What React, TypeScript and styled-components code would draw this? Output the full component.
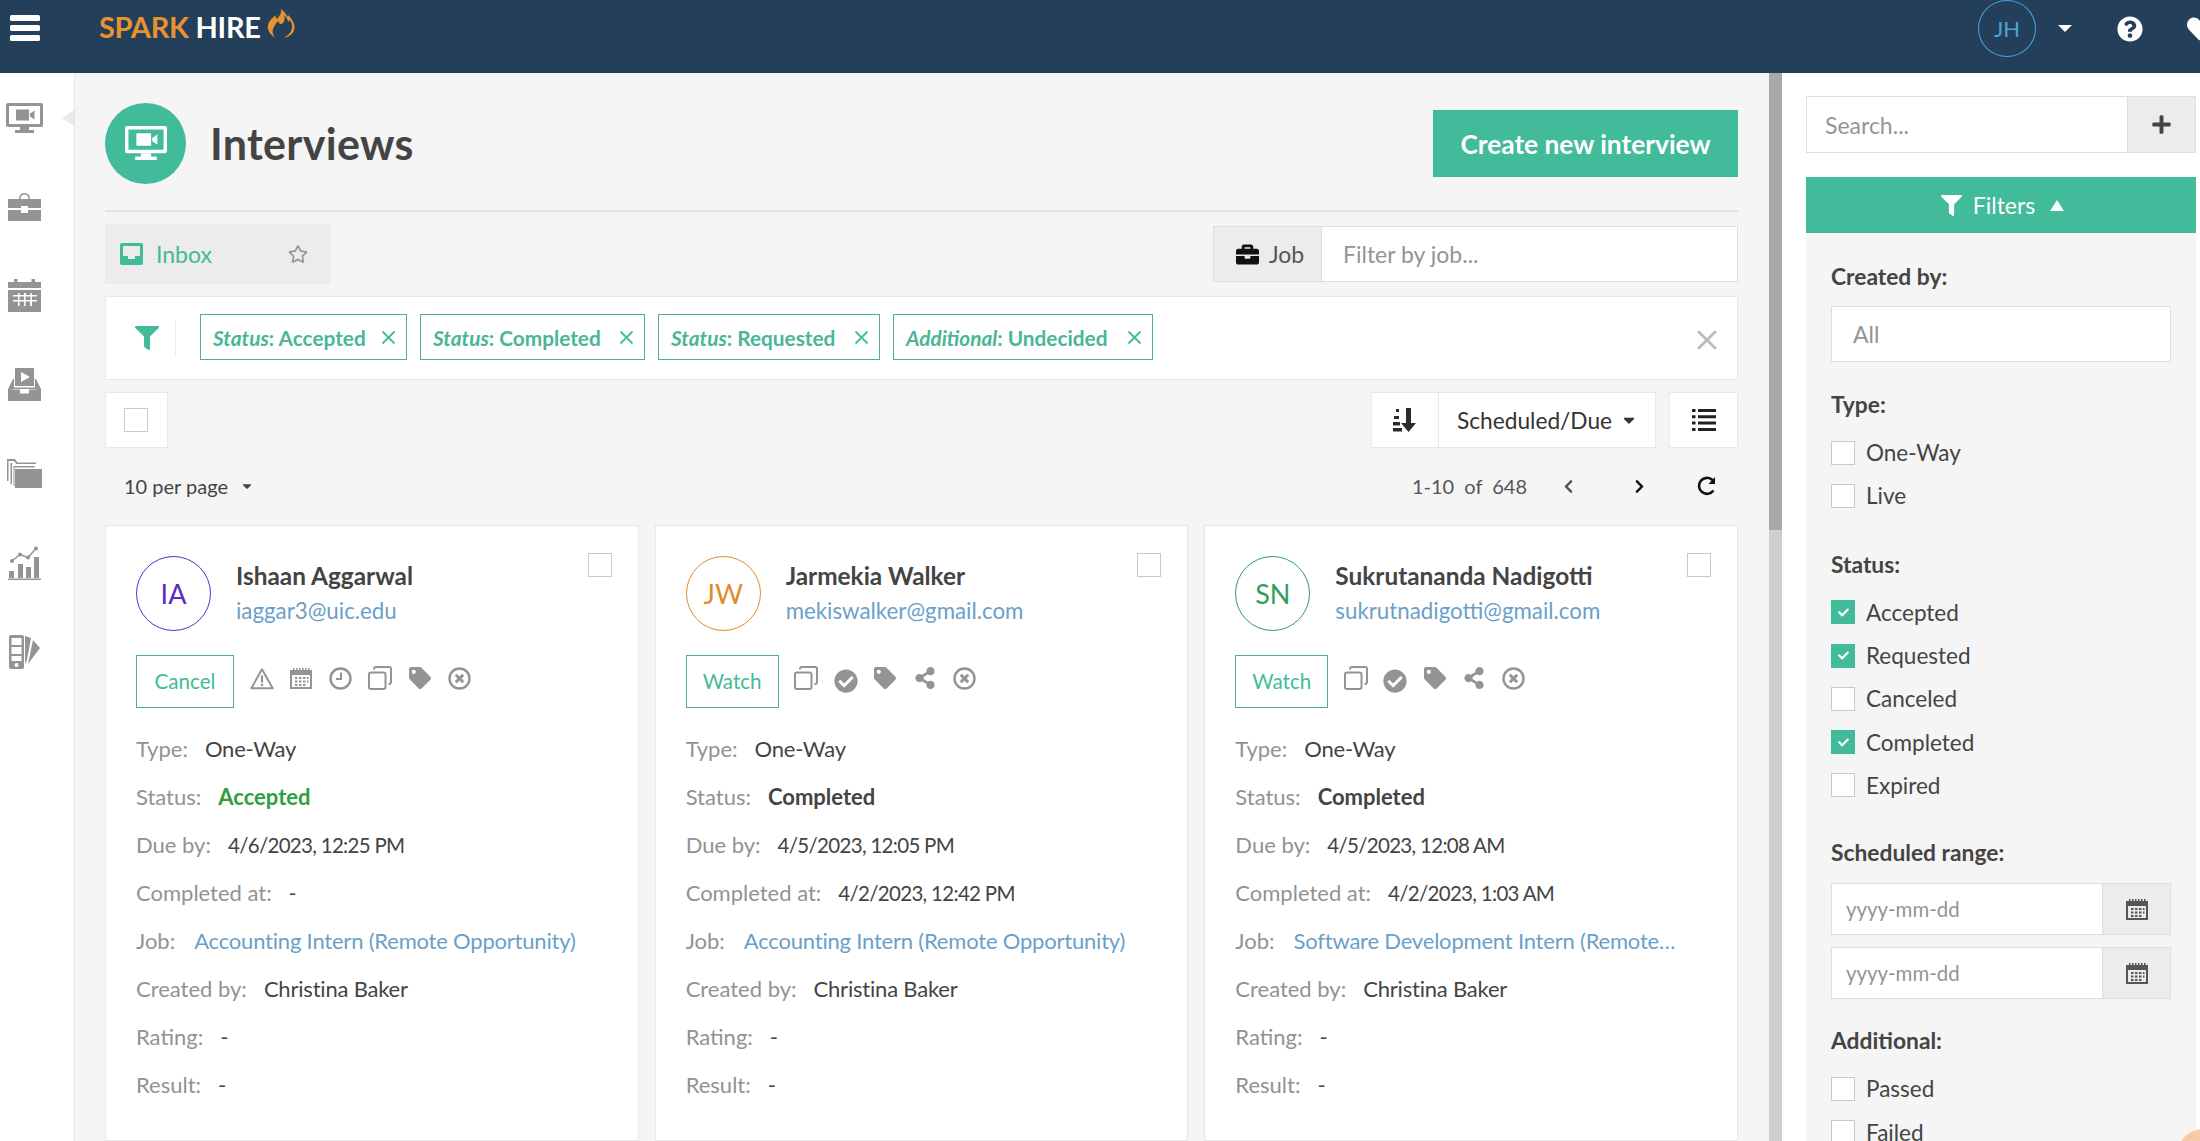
import React from 'react';
import styled, { createGlobalStyle } from 'styled-components';
import { FaFilter, FaPlus, FaQuestionCircle, FaHeart, FaTag, FaShareAlt, FaCheckCircle, FaChevronLeft, FaChevronRight, FaRegStar, FaBriefcase, FaCheck, FaCaretDown } from 'react-icons/fa';

const TEAL = '#41bb99';
const FONT = `Lato, "Noto Sans", "Liberation Sans", sans-serif`;

const Global = createGlobalStyle`
  html, body { margin: 0; padding: 0; height: 1141px; overflow: hidden; background: #fff; }
  body { font-family: ${FONT}; color: #444; }
  * { box-sizing: border-box; }
`;

const Page = styled.div`width: 2200px; height: 1141px; overflow: hidden; display: flex; flex-direction: column; position: relative;`;
const TopBar = styled.header`height: 73px; flex: none; background: #233f5a; display: flex; align-items: center; padding-bottom: 16px; overflow: hidden;`;
const MenuCell = styled.div`width: 75px; height: 73px; margin-bottom: -16px; padding: 15px 0 0 10px; border-right: 1px solid #1f3950; flex: none;`;
const Burger = styled.div`width: 30px; height: 26px; display: flex; flex-direction: column; justify-content: space-between;`;
const BurgerBar = styled.span`display: block; height: 6px; border-radius: 1.5px; background: #fff;`;
const Logo = styled.div`display: flex; align-items: center; margin-left: 24px; font-size: 29px; font-weight: 700; letter-spacing: -0.3px; line-height: 1; margin-top: -4px;`;
const LogoSpark = styled.span`color: #e8932f;`;
const LogoHire = styled.span`color: #fff; margin-left: 7px;`;
const LogoFlame = styled.svg`width: 28px; height: 29px; margin: -6px 0 0 6px;`;
const UserArea = styled.div`margin-left: auto; margin-right: -13px; display: flex; align-items: center;`;
const UserCircle = styled.div`width: 58px; height: 57px; border-radius: 50%; border: 1px solid #45a6d6; color: #45a6d6; font-size: 22px; display: flex; align-items: center; justify-content: center;`;
const TopCaret = styled.div`width: 0; height: 0; margin: 0 45px 0 22px; border-left: 7px solid transparent; border-right: 7px solid transparent; border-top: 7px solid #fff;`;
const TopIcons = styled.div`display: flex; align-items: center; gap: 44px; color: #fff; font-size: 26px; line-height: 0;`;

const Body = styled.div`flex: 1; display: flex; min-height: 0;`;
const Nav = styled.nav`width: 75px; flex: none; background: #fff; border-right: 1px solid #e6e6e6; display: flex; flex-direction: column; color: #949494;`;
const NavItem = styled.div`height: 89px; flex: none; display: flex; align-items: center; justify-content: center; position: relative; padding-right: 25px;`;
const NavArrow = styled.span`position: absolute; right: 0; top: 37px; width: 0; height: 0; border-top: 8px solid transparent; border-bottom: 8px solid transparent; border-right: 12px solid #e9e9e9;`;

const Main = styled.main`width: 1694px; flex: none; background: #f5f5f5; padding: 30px 31px 0 30px; overflow: hidden;`;
const TitleRow = styled.div`display: flex; align-items: center; height: 109px; padding-bottom: 27px; border-bottom: 2px solid #e2e2e2;`;
const TitleCircle = styled.div`width: 81px; height: 81px; border-radius: 50%; background: ${TEAL}; color: #fff; display: flex; align-items: center; justify-content: center; flex: none;`;
const Title = styled.h1`font-size: 43px; font-weight: 700; color: #444; margin: 1px 0 0 24px; letter-spacing: 0.3px;`;
const CreateButton = styled.button`margin-left: auto; width: 305px; height: 67px; border: 0; background: ${TEAL}; color: #fff; font: 700 26.3px ${FONT}; margin-top: 1px;`;

const TabRow = styled.div`display: flex; align-items: center; justify-content: space-between; margin-top: 12px;`;
const InboxTab = styled.div`width: 225px; height: 60px; background: #ececec; display: flex; align-items: center; padding: 0 15px; color: ${TEAL}; font-size: 23px;`;
const InboxLabel = styled.span`margin-left: 13px; flex: 1;`;
const StarIcon = styled(FaRegStar)`color: #949494; font-size: 20px; margin-right: 7px;`;
const JobGroup = styled.div`width: 525px; height: 56px; display: flex; border: 1px solid #dedede; background: #fff;`;
const JobAddon = styled.div`width: 108px; background: #ececec; border-right: 1px solid #dedede; display: flex; align-items: center; padding-left: 22px; gap: 10px; font-size: 23px; color: #555;`;
const JobBagIcon = styled(FaBriefcase)`color: #111; font-size: 23px;`;
const PlaceholderText = styled.span<{ $size?: number; $pad?: number }>`color: #949494; font-size: ${p => p.$size ?? 23}px; padding-left: ${p => p.$pad ?? 21}px; align-self: center;`;

const FilterBar = styled.div`margin-top: 12px; height: 84px; background: #fff; border: 1px solid #e8e8e8; display: flex; align-items: center; padding: 0 19px 0 29px;`;
const FunnelIcon = styled(FaFilter)`color: ${TEAL}; font-size: 24px; flex: none;`;
const BarSep = styled.span`width: 1px; height: 37px; background: #ededed; margin: 0 24px 0 16px;`;
const Chips = styled.div`display: flex; gap: 13px; margin-top: -2px;`;
const Chip = styled.div<{ $w: number }>`width: ${p => p.$w}px; height: 46px; border: 1.5px solid #4fae96; color: #4ab597; font-size: 20.8px; font-weight: 700; display: flex; align-items: center; justify-content: space-between; padding: 0 10px 0 12px; white-space: nowrap;`;
const ChipKey = styled.em`font-style: italic;`;
const ThinX = styled.svg<{ $c: string; $size: number }>`width: ${p => p.$size}px; height: ${p => p.$size}px; color: ${p => p.$c}; flex: none;`;
const ClearSlot = styled.div`margin-left: auto; margin-top: 3px; line-height: 0;`;

const Toolbar = styled.div`display: flex; align-items: stretch; height: 56px; margin-top: 12px; gap: 13px;`;
const SelectAll = styled.div`width: 63px; background: #fff; border: 1px solid #e8e8e8; display: flex; align-items: center; justify-content: center; margin-right: auto; padding-right: 1px;`;
const SortGroup = styled.div`width: 285px; background: #fff; border: 1px solid #e8e8e8; display: flex; align-items: center;`;
const SortIconCell = styled.div`width: 67px; height: 100%; border-right: 1px solid #e8e8e8; display: flex; align-items: center; justify-content: center; color: #2b2b2b;`;
const SortLabel = styled.div`flex: 1; display: flex; align-items: center; justify-content: space-between; padding: 0 17px 0 18px; font-size: 22.7px; color: #333;`;
const ListButton = styled.div`width: 69px; background: #fff; border: 1px solid #e8e8e8; display: flex; align-items: center; justify-content: center; color: #222;`;

const PagerRow = styled.div`height: 76.5px; display: flex; align-items: center; padding: 0 21px 0 19px; font-size: 20px; color: #444;`;
const PerPage = styled.div`display: flex; align-items: center; gap: 12px; margin-right: auto;`;
const PagerInfo = styled.div`word-spacing: 5px; color: #555;`;
const PagerButtons = styled.div`display: flex; align-items: center; margin-left: 34px; color: #333; font-size: 18px;`;
const PagerPrev = styled(FaChevronLeft)`color: #555; font-size: 15px;`;
const PagerNext = styled(FaChevronRight)`color: #111; font-size: 15px; margin-left: 56px;`;
const PagerReload = styled.svg`width: 20px; height: 20px; margin-left: 50px; color: #111;`;

const CardGrid = styled.div`display: grid; grid-template-columns: repeat(3, 1fr); gap: 16px;`;
const Card = styled.article`background: #fff; border: 1px solid #e8e8e8; padding: 30px 26px 31px 30px; min-width: 0;`;
const CardHead = styled.div`display: flex; align-items: flex-start; height: 74px;`;
const Avatar = styled.div<{ $c: string }>`width: 75px; height: 75px; border-radius: 50%; border: 1px solid ${p => p.$c}; color: ${p => p.$c}; display: flex; align-items: center; justify-content: center; font-size: 27px; flex: none;`;
const Person = styled.div`margin-left: 25px; flex: 1; min-width: 0; padding-top: 3px;`;
const PersonName = styled.div`font-size: 24.4px; font-weight: 700; color: #444; line-height: 34px;`;
const PersonMail = styled.div`font-size: 22.3px; color: #6a9fc9; line-height: 36px;`;
const CheckBox = styled.div<{ $on?: boolean }>`width: 24px; height: 24px; flex: none; background: ${p => (p.$on ? TEAL : '#fff')}; border: 1px solid ${p => (p.$on ? TEAL : '#c9c9c9')}; display: flex; align-items: center; justify-content: center; color: #fff; font-size: 11px;`;
const CardCheck = styled(CheckBox)`margin-top: -3px;`;
const Actions = styled.div`display: flex; align-items: center; margin-top: 25px; height: 53px; gap: 15.5px; color: #949494;`;
const ActionButton = styled.button<{ $w: number }>`width: ${p => p.$w}px; height: 53px; padding: 0; border: 1px solid #4fae96; background: #fff; color: ${TEAL}; font: 400 20.6px ${FONT};`;
const ActionIcon = styled.span`width: 24px; height: 26px; display: flex; align-items: center; justify-content: center; margin-top: -6px; font-size: 22px; flex: none;`;
const CheckCircleIcon = styled(FaCheckCircle)`font-size: 24px; margin-top: 5px;`;
const Rows = styled.div`margin-top: 17px;`;
const Row = styled.div`height: 48px; display: flex; align-items: center; font-size: 22px; white-space: nowrap;`;
const RowLabel = styled.span`color: #929292; margin-right: 17px; flex: none;`;
const RowValue = styled.span`color: #444; letter-spacing: -0.2px;`;
const RowDate = styled.span`color: #444; font-size: 20.5px; letter-spacing: -0.7px;`;
const RowStrong = styled.span<{ $c: string }>`color: ${p => p.$c}; font-weight: 700;`;
const RowLink = styled.span`color: #6a9fc9; font-size: 22px; letter-spacing: -0.2px; margin-left: 2px; max-width: 387px; overflow: hidden; text-overflow: ellipsis;`;

const Scrollbar = styled.div`width: 13px; flex: none; background: #cfcfcf; display: flex; flex-direction: column;`;
const ScrollThumb = styled.div`height: 457px; background: #a9a9a9;`;

const Side = styled.aside`flex: 1; background: #fff; padding: 23px 4px 0 24px; min-width: 0;`;
const SearchGroup = styled.div`height: 57px; display: flex; border: 1px solid #dedede;`;
const SearchAddon = styled.div`width: 68px; margin-left: auto; background: #ececec; border-left: 1px solid #dedede; display: flex; align-items: center; justify-content: center; color: #444; font-size: 21px;`;
const FiltersBar = styled.div`margin-top: 24px; height: 56px; background: ${TEAL}; color: #fff; display: flex; align-items: center; justify-content: center; font-size: 23px; gap: 11px; padding-left: 3px;`;
const FiltersCaret = styled.span`width: 0; height: 0; margin-left: 4px; border-left: 7px solid transparent; border-right: 7px solid transparent; border-bottom: 11px solid #fff;`;
const FilterBody = styled.div`background: #f5f5f5; padding: 28px 25px 0 25px;`;
const Section = styled.section<{ $top?: number }>`margin-top: ${p => p.$top ?? 0}px;`;
const SectionLabel = styled.div`height: 30px; line-height: 30px; font-size: 22.8px; font-weight: 700; color: #444;`;
const TextInput = styled.div`margin-top: 15px; height: 56px; background: #fff; border: 1px solid #dedede; display: flex;`;
const CheckList = styled.div`margin-top: 12px;`;
const CheckRow = styled.div`height: 43.3px; display: flex; align-items: center; gap: 11px; font-size: 22.5px; color: #444;`;
const DateGroup = styled.div`height: 52px; background: #fff; border: 1px solid #dedede; display: flex; margin-top: 12px;`;
const DateStack = styled.div`margin-top: 16px; & > :first-child { margin-top: 0; }`;
const DateAddon = styled.div`width: 68px; margin-left: auto; background: #ececec; border-left: 1px solid #dedede; display: flex; align-items: center; justify-content: center; color: #555;`;
const ChatBlob = styled.div`position: absolute; right: -28px; bottom: -38px; width: 50px; height: 50px; border-radius: 50%; background: #f8c9a6;`;

const XGlyph = ({ size, color, weight }: { size: number; color: string; weight: number }) => (
  <ThinX $size={size} $c={color} viewBox="0 0 20 20" aria-hidden>
    <path d="M2 2l16 16M18 2L2 18" stroke="currentColor" strokeWidth={weight} fill="none" />
  </ThinX>
);
const ListGlyph = () => (
  <svg width="24" height="22" viewBox="0 0 24 22" fill="currentColor" aria-hidden>
    <path d="M0 0h3.500v3H0zM6 0h18v3H6zM0 6.300h3.500v3H0zM6 6.300h18v3H6zM0 12.600h3.500v3H0zM6 12.600h18v3H6zM0 19h3.500v3H0zM6 19h18v3H6z" />
  </svg>
);
const CalendarIcon = ({ size = 22 }: { size?: number }) => (
  <svg width={size} height={size} viewBox="0 0 22 22" fill="currentColor" aria-hidden>
    <path fillRule="evenodd" d="M0 3h22v19H0zM2 8v12h18V8z" />
    <path d="M3 1h1.500v2H3zM6 1h1.500v2H6zM9 1h1.500v2H9zM12 1h1.500v2H12zM15 1h1.500v2H15zM18 1h1.500v2H18z" />
    <path d="M5 10h2.500v2H5zM9 10h2.500v2H9zM13 10h2.500v2H13zM17 10h1.500v2H17zM5 13.500h2.500v2H5zM9 13.500h2.500v2H9zM13 13.500h2.500v2H13zM17 13.500h1.500v2H17zM5 17h2.500v2H5zM9 17h2.500v2H9zM13 17h2.500v2H13z" />
  </svg>
);
const MonitorIcon = ({ w = 37, h = 30 }: { w?: number; h?: number }) => (
  <svg width={w} height={h} viewBox="0 0 37 30" fill="currentColor" aria-hidden>
    <path fillRule="evenodd" d="M2 0h33a2 2 0 0 1 2 2v20a2 2 0 0 1-2 2H2a2 2 0 0 1-2-2V2a2 2 0 0 1 2-2zM3 3v18h31V3z" />
    <path d="M14 24h9v3h5v3H9v-3h5z" />
    <path d="M10 6.500h13v11H10zM24 10.500l4.500-3v9l-4.500-3z" />
  </svg>
);
const NavBriefcase = () => (
  <svg width="33" height="30" viewBox="0 0 33 30" fill="currentColor" aria-hidden>
    <path d="M11 7C11 3 13.500 1 16.500 1S22 3 22 7h-1.500C20.500 4 19 2.500 16.500 2.500S12.500 4 12.500 7z" />
    <path d="M0 7h33v9H20v-2h-7v2H0zM0 18h13v3h7v-3h13v11H0z" />
  </svg>
);
const NavCalendar = () => (
  <svg width="33" height="33" viewBox="0 0 33 33" fill="currentColor" aria-hidden>
    <path d="M0 3h6V0h3.500v3h14V0H27v3h6v6H0z" />
    <path fillRule="evenodd" d="M0 11h33v22H0zM5 16v1.500h5v3.500H5v1.500h5V27h1.500v-4.500h4.500V27h1.500v-4.500h4.500V27H24v-4.500h5V21h-5v-3.500h5V16h-5v-2h-1.500v2h-4.500v-2H16v2h-4.500v-2H10v2zM11.500 17.500H16V21h-4.500zM17.500 17.500H22.500V21h-5z" />
  </svg>
);
const NavInbox = () => (
  <svg width="33" height="33" viewBox="0 0 33 33" fill="currentColor" aria-hidden>
    <path fillRule="evenodd" d="M7 0h19v18H7zM13 4v10l9-5z" />
    <path d="M5 11h1v8.500h21V11h1l5 10v12H0V21zM3.500 21.500H12v4h9v-4h8.500L27 21H6z" />
  </svg>
);
const NavFolders = () => (
  <svg width="35" height="29" viewBox="0 0 35 29" fill="currentColor" aria-hidden>
    <path d="M0 0h8l2.500 3.500H29V5H9.500L7 2H1.500v20H0z" />
    <path d="M3.500 4H5v21H3.500z" />
    <path d="M8 10h27v19H8z" />
    <path d="M6.500 7h21v1.500h-20V27h-1z" />
  </svg>
);
const NavChart = () => (
  <svg width="33" height="34" viewBox="0 0 33 34" fill="currentColor" aria-hidden>
    <path d="M1 25h5v7H1zM10 18h5v14h-5zM18 21h5v11h-5zM26 11h5v21h-5zM0 32.500h33V34H0z" />
    <circle cx="4" cy="15" r="2" /><circle cx="12" cy="8.500" r="2" /><circle cx="20" cy="11.500" r="2" /><circle cx="28" cy="2.500" r="2" />
    <path d="M4 15L12 8.500 20 11.500 28 2.500" fill="none" stroke="currentColor" strokeWidth="1.500" />
  </svg>
);
const NavSwatch = () => (
  <svg width="31" height="34" viewBox="0 0 31 34" fill="currentColor" aria-hidden>
    <path fillRule="evenodd" d="M2 0h11a2 2 0 0 1 2 2v30a2 2 0 0 1-2 2H2a2 2 0 0 1-2-2V2a2 2 0 0 1 2-2zM2.500 3v7h10V3zM2.500 12v7h10v-7zM2.500 21v5h10v-5zM7.500 28a2 2 0 1 0 0 4 2 2 0 0 0 0-4z" />
    <path d="M16 1l6 2-4 22-2 4zM19 29l5-24 7 8z" />
  </svg>
);
const InboxGlyph = () => (
  <svg width="23" height="22" viewBox="0 0 23 22" fill="currentColor" aria-hidden>
    <path fillRule="evenodd" d="M2 0h19a2 2 0 0 1 2 2v18a2 2 0 0 1-2 2H2a2 2 0 0 1-2-2V2a2 2 0 0 1 2-2zM3 3v10h5v3h7v-3h5V3z" />
  </svg>
);
const WarningIcon = () => (
  <svg width="27" height="25" viewBox="0 0 27 25" aria-hidden>
    <path d="M13.500 2L25.500 23.500H1.500z" fill="none" stroke="currentColor" strokeWidth="2.200" strokeLinejoin="round" />
    <path d="M12.300 9h2.400v8h-2.400z" fill="currentColor" /><circle cx="13.500" cy="19.700" r="1.400" fill="currentColor" />
  </svg>
);
const ClockIcon = () => (
  <svg width="23" height="23" viewBox="0 0 23 23" fill="none" aria-hidden>
    <circle cx="11.500" cy="11.500" r="10" stroke="currentColor" strokeWidth="2.400" />
    <path d="M12 5.500v6.500H7" stroke="currentColor" strokeWidth="2" />
  </svg>
);
const CloneIcon = () => (
  <svg width="24" height="24" viewBox="0 0 24 24" fill="none" aria-hidden>
    <rect x="1" y="6.500" width="16.500" height="16.500" rx="2" stroke="currentColor" strokeWidth="2" />
    <path d="M6 3.500V3a2 2 0 0 1 2-2h13a2 2 0 0 1 2 2v13a2 2 0 0 1-2 2h-.5" stroke="currentColor" strokeWidth="2" />
  </svg>
);
const XCircleIcon = () => (
  <svg width="23" height="23" viewBox="0 0 23 23" fill="none" aria-hidden>
    <circle cx="11.500" cy="11.500" r="10" stroke="currentColor" strokeWidth="2.400" />
    <path d="M7.800 7.800l7.400 7.400M15.200 7.800l-7.400 7.400" stroke="currentColor" strokeWidth="3" />
  </svg>
);
const SortIcon = () => (
  <svg width="24" height="24" viewBox="0 0 24 24" fill="currentColor" aria-hidden>
    <path d="M3 1h3v3H3zM1 8h5v3H1zM0 14h7v3.500H0zM0 20h9v3.500H0z" />
    <path d="M13 0h5v15h5l-7.500 9L8 15h5z" />
  </svg>
);
const FlameGlyph = () => (
  <LogoFlame viewBox="0 0 28 29" aria-hidden>
    <path fill="#e8932f" d="M14 0C15 5 12 7 10 10 9 9 8.500 8 8.500 6.500 3 10 0 15 1 20 2 24 5 27 8 28.500 6 26 5 23 6 20 7 17 9 15 11 12 12 15 14 16 16 14 18 12 18 9 17 6 20 9 21 11 21 13L23 11C25 14 26 18 24 22 23 25 20 27 17 28.500 23 28 27 24 27.500 19 28 14 24 9 21 6L20.500 8C19 5 17 2 14 0Z" />
  </LogoFlame>
);
const ReloadGlyph = () => (
  <PagerReload viewBox="0 0 20 20" fill="none" aria-hidden>
    <path d="M16.500 14.500A8 8 0 1 1 15.500 4" stroke="currentColor" strokeWidth="2.600" />
    <path d="M18 1v7h-6.500z" fill="currentColor" />
  </PagerReload>
);

const I = {
  warn: <WarningIcon />, cal: <CalendarIcon />, clock: <ClockIcon />, clone: <CloneIcon />, tag: <FaTag />,
  x: <XCircleIcon />, check: <CheckCircleIcon />, share: <FaShareAlt />,
};

type CardData = {
  initials: string; color: string; name: string; mail: string; button: string; bw: number; icons: (keyof typeof I)[];
  status: string; statusColor: string; due: string; completed: string; job: string;
};

const cards: CardData[] = [
  { initials: 'IA', color: '#5b2bc4', name: 'Ishaan Aggarwal', mail: 'iaggar3@uic.edu', button: 'Cancel', bw: 98, icons: ['warn', 'cal', 'clock', 'clone', 'tag', 'x'], status: 'Accepted', statusColor: '#2e9e3f', due: '4/6/2023, 12:25 PM', completed: '-', job: 'Accounting Intern (Remote Opportunity)' },
  { initials: 'JW', color: '#e08a2c', name: 'Jarmekia Walker', mail: 'mekiswalker@gmail.com', button: 'Watch', bw: 93, icons: ['clone', 'check', 'tag', 'share', 'x'], status: 'Completed', statusColor: '#444', due: '4/5/2023, 12:05 PM', completed: '4/2/2023, 12:42 PM', job: 'Accounting Intern (Remote Opportunity)' },
  { initials: 'SN', color: '#2f9e5a', name: 'Sukrutananda Nadigotti', mail: 'sukrutnadigotti@gmail.com', button: 'Watch', bw: 93, icons: ['clone', 'check', 'tag', 'share', 'x'], status: 'Completed', statusColor: '#444', due: '4/5/2023, 12:08 AM', completed: '4/2/2023, 1:03 AM', job: 'Software Development Intern (Remote Opportunity)' },
];

const chips = [
  { k: 'Status', v: 'Accepted', w: 207 }, { k: 'Status', v: 'Completed', w: 225 },
  { k: 'Status', v: 'Requested', w: 222 }, { k: 'Additional', v: 'Undecided', w: 260 },
];

const InterviewCard = ({ c }: { c: CardData }) => (
  <Card>
    <CardHead>
      <Avatar $c={c.color}>{c.initials}</Avatar>
      <Person>
        <PersonName>{c.name}</PersonName>
        <PersonMail>{c.mail}</PersonMail>
      </Person>
      <CardCheck />
    </CardHead>
    <Actions>
      <ActionButton $w={c.bw}>{c.button}</ActionButton>
      {c.icons.map((k, i) => <ActionIcon key={i}>{I[k]}</ActionIcon>)}
    </Actions>
    <Rows>
      <Row><RowLabel>Type:</RowLabel><RowValue>One-Way</RowValue></Row>
      <Row><RowLabel>Status:</RowLabel><RowStrong $c={c.statusColor}>{c.status}</RowStrong></Row>
      <Row><RowLabel>Due by:</RowLabel><RowDate>{c.due}</RowDate></Row>
      <Row><RowLabel>Completed at:</RowLabel><RowDate>{c.completed}</RowDate></Row>
      <Row><RowLabel>Job:</RowLabel><RowLink>{c.job}</RowLink></Row>
      <Row><RowLabel>Created by:</RowLabel><RowValue>Christina Baker</RowValue></Row>
      <Row><RowLabel>Rating:</RowLabel><RowValue>-</RowValue></Row>
      <Row><RowLabel>Result:</RowLabel><RowValue>-</RowValue></Row>
    </Rows>
  </Card>
);

const CheckItem = ({ label, on }: { label: string; on?: boolean }) => (
  <CheckRow><CheckBox $on={on}>{on ? <FaCheck /> : null}</CheckBox>{label}</CheckRow>
);

const DateField = () => (
  <DateGroup>
    <PlaceholderText $size={20.4} $pad={14}>yyyy-mm-dd</PlaceholderText>
    <DateAddon><CalendarIcon /></DateAddon>
  </DateGroup>
);

export default function App() {
  return (
    <Page>
      <Global />
      <TopBar>
        <MenuCell><Burger><BurgerBar /><BurgerBar /><BurgerBar /></Burger></MenuCell>
        <Logo><LogoSpark>SPARK</LogoSpark><LogoHire>HIRE</LogoHire><FlameGlyph /></Logo>
        <UserArea>
          <UserCircle>JH</UserCircle>
          <TopCaret />
          <TopIcons><FaQuestionCircle /><FaHeart /></TopIcons>
        </UserArea>
      </TopBar>
      <Body>
        <Nav>
          <NavItem><MonitorIcon /><NavArrow /></NavItem>
          <NavItem><NavBriefcase /></NavItem>
          <NavItem><NavCalendar /></NavItem>
          <NavItem><NavInbox /></NavItem>
          <NavItem><NavFolders /></NavItem>
          <NavItem><NavChart /></NavItem>
          <NavItem><NavSwatch /></NavItem>
        </Nav>
        <Main>
          <TitleRow>
            <TitleCircle><MonitorIcon w={42} h={34} /></TitleCircle>
            <Title>Interviews</Title>
            <CreateButton>Create new interview</CreateButton>
          </TitleRow>
          <TabRow>
            <InboxTab><InboxGlyph /><InboxLabel>Inbox</InboxLabel><StarIcon /></InboxTab>
            <JobGroup>
              <JobAddon><JobBagIcon />Job</JobAddon>
              <PlaceholderText>Filter by job...</PlaceholderText>
            </JobGroup>
          </TabRow>
          <FilterBar>
            <FunnelIcon />
            <BarSep />
            <Chips>
              {chips.map(c => (
                <Chip key={c.v} $w={c.w}><span><ChipKey>{c.k}</ChipKey>: {c.v}</span><XGlyph size={15} color={TEAL} weight={2.4} /></Chip>
              ))}
            </Chips>
            <ClearSlot><XGlyph size={22} color="#bdbdbd" weight={2.6} /></ClearSlot>
          </FilterBar>
          <Toolbar>
            <SelectAll><CheckBox /></SelectAll>
            <SortGroup>
              <SortIconCell><SortIcon /></SortIconCell>
              <SortLabel>Scheduled/Due <FaCaretDown size={18} /></SortLabel>
            </SortGroup>
            <ListButton><ListGlyph /></ListButton>
          </Toolbar>
          <PagerRow>
            <PerPage>10 per page <FaCaretDown size={14} /></PerPage>
            <PagerInfo>1-10 of 648</PagerInfo>
            <PagerButtons><PagerPrev /><PagerNext /><ReloadGlyph /></PagerButtons>
          </PagerRow>
          <CardGrid>
            {cards.map(c => <InterviewCard key={c.name} c={c} />)}
          </CardGrid>
        </Main>
        <Scrollbar><ScrollThumb /></Scrollbar>
        <Side>
          <SearchGroup>
            <PlaceholderText $pad={18}>Search...</PlaceholderText>
            <SearchAddon><FaPlus /></SearchAddon>
          </SearchGroup>
          <FiltersBar><FaFilter size={21} />Filters<FiltersCaret /></FiltersBar>
          <FilterBody>
            <Section>
              <SectionLabel>Created by:</SectionLabel>
              <TextInput><PlaceholderText>All</PlaceholderText></TextInput>
            </Section>
            <Section $top={27}>
              <SectionLabel>Type:</SectionLabel>
              <CheckList><CheckItem label="One-Way" /><CheckItem label="Live" /></CheckList>
            </Section>
            <Section $top={31}>
              <SectionLabel>Status:</SectionLabel>
              <CheckList>
                <CheckItem label="Accepted" on /><CheckItem label="Requested" on /><CheckItem label="Canceled" />
                <CheckItem label="Completed" on /><CheckItem label="Expired" />
              </CheckList>
            </Section>
            <Section $top={30}>
              <SectionLabel>Scheduled range:</SectionLabel>
              <DateStack><DateField /><DateField /></DateStack>
            </Section>
            <Section $top={26}>
              <SectionLabel>Additional:</SectionLabel>
              <CheckList><CheckItem label="Passed" /><CheckItem label="Failed" /></CheckList>
            </Section>
          </FilterBody>
        </Side>
        <ChatBlob />
      </Body>
    </Page>
  );
}
